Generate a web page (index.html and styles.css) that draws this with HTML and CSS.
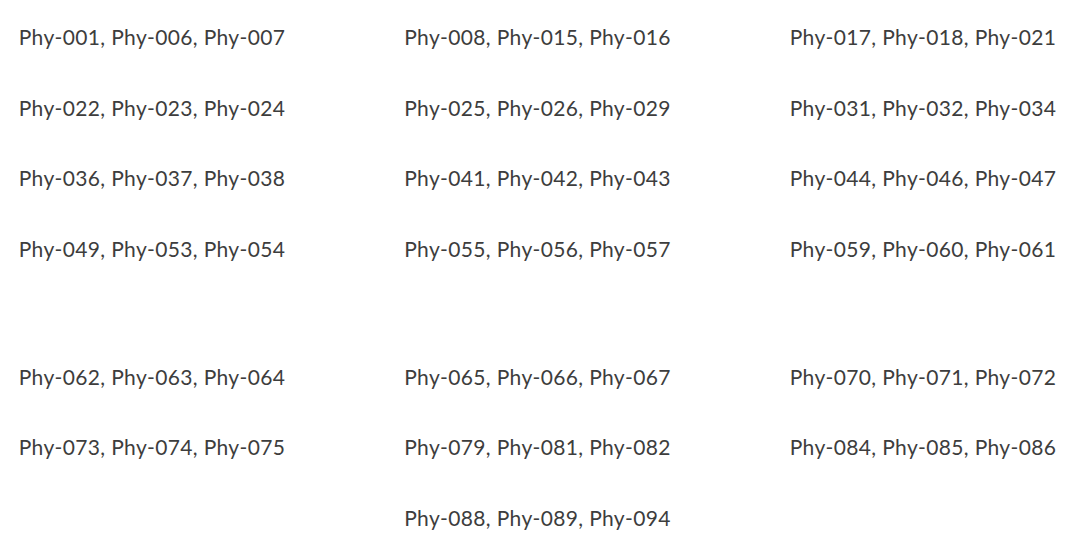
FILE: index.html
```html
<!DOCTYPE html>
<html>
<head>
<meta charset="utf-8">
<link rel="stylesheet" href="styles.css">
</head>
<body>
<main class="page">
  <section class="grid first">
    <p class="cell">Phy-001, Phy-006, Phy-007</p>
    <p class="cell">Phy-008, Phy-015, Phy-016</p>
    <p class="cell">Phy-017, Phy-018, Phy-021</p>
    <p class="cell">Phy-022, Phy-023, Phy-024</p>
    <p class="cell">Phy-025, Phy-026, Phy-029</p>
    <p class="cell">Phy-031, Phy-032, Phy-034</p>
    <p class="cell">Phy-036, Phy-037, Phy-038</p>
    <p class="cell">Phy-041, Phy-042, Phy-043</p>
    <p class="cell">Phy-044, Phy-046, Phy-047</p>
    <p class="cell">Phy-049, Phy-053, Phy-054</p>
    <p class="cell">Phy-055, Phy-056, Phy-057</p>
    <p class="cell">Phy-059, Phy-060, Phy-061</p>
  </section>
  <section class="grid second">
    <p class="cell">Phy-062, Phy-063, Phy-064</p>
    <p class="cell">Phy-065, Phy-066, Phy-067</p>
    <p class="cell">Phy-070, Phy-071, Phy-072</p>
    <p class="cell">Phy-073, Phy-074, Phy-075</p>
    <p class="cell">Phy-079, Phy-081, Phy-082</p>
    <p class="cell">Phy-084, Phy-085, Phy-086</p>
    <p class="cell empty"></p>
    <p class="cell">Phy-088, Phy-089, Phy-094</p>
    <p class="cell empty"></p>
  </section>
</main>
</body>
</html>
```
FILE: styles.css
```css
html, body {
  margin: 0;
  padding: 0;
  background: #ffffff;
}
.page {
  width: 1075px;
  padding-top: 22px;
  display: flex;
  flex-direction: column;
  gap: 98px;
  font-family: "Lato", "Open Sans", sans-serif;
  color: #3d3d3d;
}
.grid {
  display: grid;
  grid-template-columns: 304px 304px 304px;
  column-gap: 81.5px;
  row-gap: 40.5px;
}
.cell {
  margin: 0;
  height: 30px;
  line-height: 30px;
  font-size: 21px;
  letter-spacing: 0.35px;
  text-align: center;
  white-space: nowrap;
}
```
